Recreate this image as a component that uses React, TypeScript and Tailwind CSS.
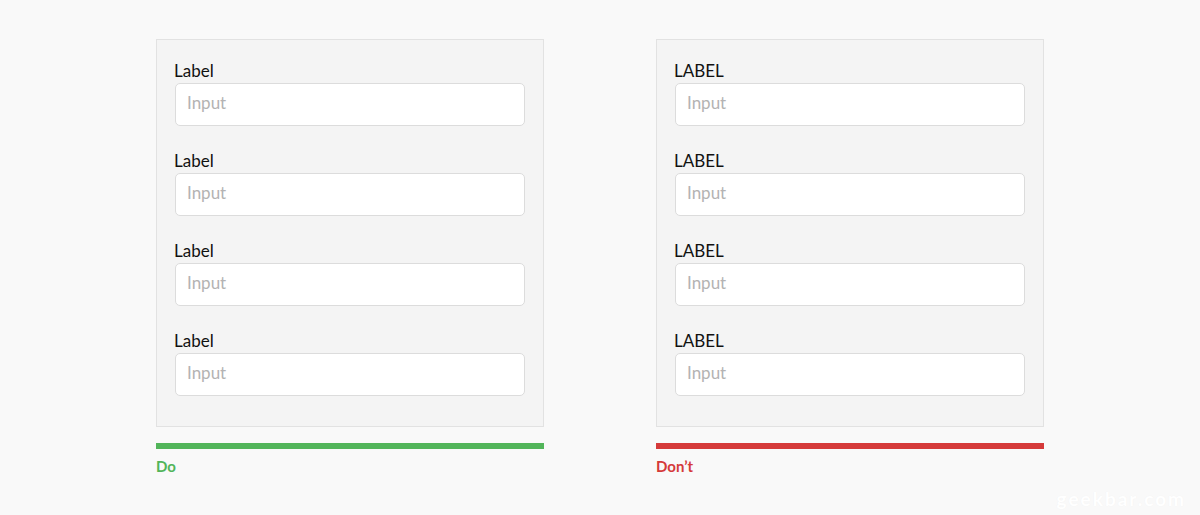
import React from "react";

const font = { fontFamily: "Lato, 'Noto Sans', sans-serif" };

function Panel({ label, color, caption }: { label: string; color: string; caption: string }) {
  return (
    <div className="w-[388px]">
      <div className="border border-[#e2e2e2] bg-[#f4f4f4] pt-[20px] px-[18px] pb-[30px] flex flex-col gap-[24px]">
        {[0, 1, 2, 3].map((i) => (
          <div key={i} className="flex flex-col">
            <div className="text-[17px] leading-[22px] text-[#111] ml-[-1px]">{label}</div>
            <div className="mt-[1px] h-[43px] w-[350px] rounded-[5px] border border-[#dcdcdc] bg-white flex items-center px-[11px] pb-[3px] text-[17px] text-[#b3b3b3]">
              Input
            </div>
          </div>
        ))}
      </div>
      <div className={`mt-[16px] h-[6px] ${color === "green" ? "bg-[#52b55a]" : "bg-[#d53a3a]"}`} />
      <div className={`mt-[7px] text-[15px] leading-[20px] font-bold ${color === "green" ? "text-[#52b55a]" : "text-[#d53a3a]"}`}>
        {caption}
      </div>
    </div>
  );
}

export default function App() {
  return (
    <div className="relative w-[1200px] h-[515px] bg-[#f9f9f9] overflow-hidden" style={font}>
      <div className="flex justify-center gap-[112px] pt-[39px]">
        <Panel label="Label" color="green" caption="Do" />
        <Panel label="LABEL" color="red" caption="Don’t" />
      </div>
      <div className="absolute right-[14px] bottom-[2px] text-[19px] tracking-[2px] text-[#ffffff] font-bold" style={{ textShadow: "0 0 1px #f0f0f0" }}>
        geekbar.com
      </div>
    </div>
  );
}
